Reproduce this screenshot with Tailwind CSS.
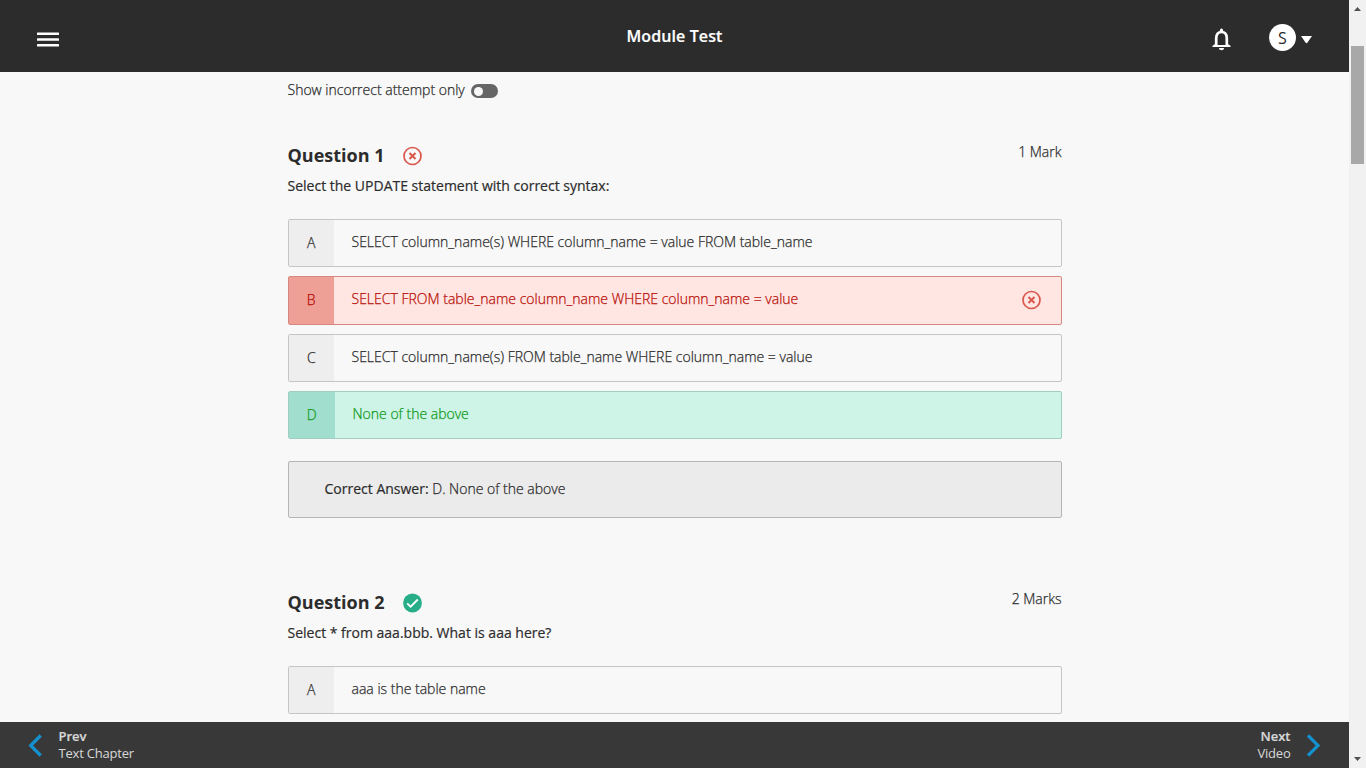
<!DOCTYPE html>
<html lang="en">
<head>
<meta charset="utf-8">
<title>Module Test</title>
<script src="https://cdn.jsdelivr.net/npm/@tailwindcss/browser@4"></script>
</head>
<body class="flex h-[768px] w-[1366px] overflow-hidden bg-[#f8f8f8] font-['Open_Sans','Noto_Sans',sans-serif] text-[14px] leading-5 text-[#2c2c2c]">
<div class="flex w-[1349px] flex-col">
  <header class="grid h-[72px] shrink-0 grid-cols-3 bg-[#2c2c2c] text-white">
    <button class="mt-[32px] ml-[37px] h-[15px] w-[22px]" aria-label="Menu">
      <svg width="22" height="15" viewBox="0 0 22 15" fill="#fff"><rect y=".4" width="22" height="2.6" rx=".5"/><rect y="6.2" width="22" height="2.6" rx=".5"/><rect y="12" width="22" height="2.6" rx=".5"/></svg>
    </button>
    <h1 class="pt-[24px] text-center text-[16px] leading-6 font-semibold tracking-[0.1px] [-webkit-text-stroke:0.2px]">Module Test</h1>
    <div class="flex items-start justify-end pr-[37px]">
      <svg class="mt-[28px] mr-[38px]" width="19" height="23" viewBox="0 0 19 23" fill="none"><path d="M4.200 18V10.200C4.200 6.400 6.200 4 9.500 4s5.300 2.400 5.300 6.200V18" stroke="#fff" stroke-width="2.700"/><path d="M.5 19V17.700L3.900 15.600V17h11.200v-1.400l3.400 2.100V19zM7.900 4V2.200a1.600 1.600 0 0 1 3.200 0V4zM7 20h5c0 1.300-1 2.300-2.500 2.300S7 21.300 7 20z" fill="#fff"/></svg>
      <div class="mt-[24px] flex size-[27px] items-center justify-center rounded-full bg-white text-[16px] text-[#2c2c2c]">S</div>
      <svg class="mt-[36px] ml-[5px]" width="11" height="8" viewBox="0 0 11 8"><path d="M0 0h11L6.500 6.500Q5.500 8 4.500 6.500z" fill="#fff"/></svg>
    </div>
  </header>

  <main class="h-[650px] overflow-hidden pr-[287.500px] pl-[287.500px]">
    <div class="flex h-[36px] items-center font-light [-webkit-text-stroke:0.25px]">
      <span class="w-[183.750px] whitespace-nowrap">Show incorrect attempt only</span>
      <span class="mt-[2px] flex h-[14px] w-[27px] items-center rounded-full bg-[#666] pl-[2.500px]"><span class="size-[9px] rounded-full bg-[#f8f8f8]"></span></span>
    </div>

    <section class="pt-[34px]">
      <div class="flex h-[27px] items-start justify-between">
        <h2 class="flex items-center text-[18px] leading-[27px] font-bold"><span class="w-[115px]">Question 1</span>
          <svg class="mt-px" width="20" height="20" viewBox="0.5 0 20 20" fill="none" stroke="#d9584c"><circle cx="10" cy="10" r="8.500" stroke-width="1.700"/><path d="M7 7l6 6M13 7l-6 6" stroke-width="2"/></svg>
        </h2>
        <span class="font-light [-webkit-text-stroke:0.25px]">1 Mark</span>
      </div>
      <p class="mt-[7px] font-medium [-webkit-text-stroke:0.2px]">Select the UPDATE statement with correct syntax:</p>
      <div class="mt-[23px] flex h-[48px] rounded-[2px] border border-[#c5c5c5] font-light [-webkit-text-stroke:0.25px]">
        <span class="flex w-[45.500px] items-center justify-center bg-[#eee]">A</span>
        <span class="pt-[12px] pl-[17.500px]">SELECT column_name(s) WHERE column_name = value FROM table_name</span>
      </div>
      <div class="mt-[9px] flex h-[49px] rounded-[2px] border border-[#d78780] bg-[#ffe6e2] font-light text-[#b90e08] [-webkit-text-stroke:0.25px]">
        <span class="flex w-[45.500px] items-center justify-center bg-[#eea097] pb-px">B</span>
        <span class="flex-1 pt-[12px] pl-[17.500px]">SELECT FROM table_name column_name WHERE column_name = value</span>
        <svg class="mt-[13px] mr-[19px]" width="20" height="20" viewBox="0.5 0 20 20" fill="none" stroke="#d9584c"><circle cx="10" cy="10" r="8.500" stroke-width="1.700"/><path d="M7 7l6 6M13 7l-6 6" stroke-width="2"/></svg>
      </div>
      <div class="mt-[9px] flex h-[48px] rounded-[2px] border border-[#c5c5c5] font-light [-webkit-text-stroke:0.25px]">
        <span class="flex w-[45.500px] items-center justify-center bg-[#eee]">C</span>
        <span class="pt-[12px] pl-[17.500px]">SELECT column_name(s) FROM table_name WHERE column_name = value</span>
      </div>
      <div class="mt-[9px] flex h-[48px] rounded-[2px] border border-[#a0cdbf] bg-[#cef4e8] font-light text-[#109b20] [-webkit-text-stroke:0.25px]">
        <span class="flex w-[46.500px] items-center justify-center bg-[#a1dece]">D</span>
        <span class="pt-[12px] pl-[17.500px]">None of the above</span>
      </div>
      <div class="mt-[22px] h-[57px] rounded-[2px] border border-[#b5b5b5] bg-[#ebebeb] pt-[17px] pl-[36px] font-light [-webkit-text-stroke:0.25px]"><b class="font-medium [-webkit-text-stroke:0.2px]">Correct Answer:</b> D. None of the above</div>
    </section>

    <section class="pt-[71px]">
      <div class="flex h-[27px] items-start justify-between">
        <h2 class="flex items-center text-[18px] leading-[27px] font-bold"><span class="w-[115px]">Question 2</span>
          <svg class="mt-px" width="20" height="20" viewBox="0.5 0 20 20" fill="none"><circle cx="10" cy="10" r="9.400" fill="#27ae88"/><path d="M4.700 10.400l3.400 3.300 7.200-7.200" stroke="#fff" stroke-width="1.800"/></svg>
        </h2>
        <span class="font-light [-webkit-text-stroke:0.25px]">2 Marks</span>
      </div>
      <p class="mt-[7px] font-medium [-webkit-text-stroke:0.2px]">Select * from aaa.bbb. What is aaa here?</p>
      <div class="mt-[23px] flex h-[48px] rounded-[2px] border border-[#c5c5c5] font-light [-webkit-text-stroke:0.25px]">
        <span class="flex w-[45.500px] items-center justify-center bg-[#eee]">A</span>
        <span class="pt-[12px] pl-[17.500px]">aaa is the table name</span>
      </div>
    </section>
  </main>

  <footer class="flex h-[46px] shrink-0 justify-between bg-[#383838] text-[13px] leading-[17px] text-[#d8d8d8]">
    <div class="flex pl-[28px]">
      <svg class="mt-[12px] mr-[16.500px]" width="14" height="23" viewBox="0 0 14 23" fill="none"><path d="M12.700 1.500l-10 10 10 10" stroke="#1492cf" stroke-width="3.200"/></svg>
      <div class="pt-[6px]"><div class="font-semibold [-webkit-text-stroke:0.2px]">Prev</div><div class="tracking-[-0.200px]">Text Chapter</div></div>
    </div>
    <div class="flex pr-[28.500px] text-right">
      <div class="pt-[6px]"><div class="font-semibold [-webkit-text-stroke:0.2px]">Next</div><div class="tracking-[-0.200px]">Video</div></div>
      <svg class="mt-[12px] ml-[16px]" width="14" height="23" viewBox="0 0 14 23" fill="none"><path d="M1 1.500l10 10-10 10" stroke="#1492cf" stroke-width="3.200"/></svg>
    </div>
  </footer>
</div>
<div class="flex w-[17px] flex-col items-center justify-between bg-[#f1f1f1]">
  <svg class="mt-[7px]" width="7" height="4"><path d="M0 4L3.500 0 7 4z" fill="#505050"/></svg>
  <div class="mt-[35px] mb-auto h-[118px] w-[13px] bg-[#a8a8a8]"></div>
  <svg class="mb-[7px]" width="7" height="4"><path d="M0 0h7L3.500 4z" fill="#505050"/></svg>
</div>
</body>
</html>
